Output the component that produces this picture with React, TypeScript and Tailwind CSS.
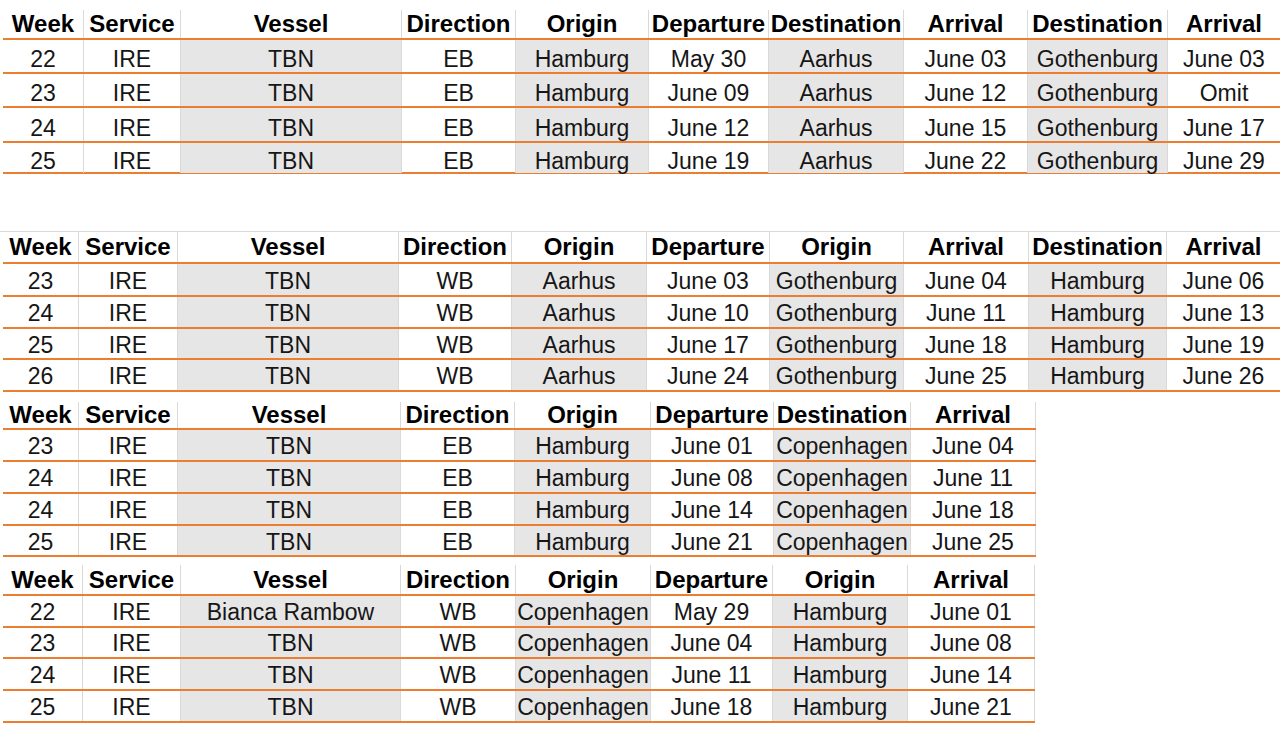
import clsx from "clsx";

type Row = { h: string; cells: string[] };

type Schedule = {
  cols: string;
  width: string;
  wrap: string;
  headH: string;
  head: string[];
  rows: Row[];
  // grey fill on body cells of these columns
  shaded: number[];
  edge?: boolean;
  // body text sits a bit low in the first block
  bodyPad: string;
};

const EB_GOT: Schedule = {
  cols: "grid-cols-[80px_97px_221px_114px_133px_120px_135px_124px_140px_113px]",
  width: "w-[1277px]",
  wrap: "pt-[10px]",
  headH: "h-[30px]",
  head: ["Week", "Service", "Vessel", "Direction", "Origin", "Departure", "Destination", "Arrival", "Destination", "Arrival"],
  rows: [
    { h: "h-[34px]", cells: ["22", "IRE", "TBN", "EB", "Hamburg", "May 30", "Aarhus", "June 03", "Gothenburg", "June 03"] },
    { h: "h-[34px]", cells: ["23", "IRE", "TBN", "EB", "Hamburg", "June 09", "Aarhus", "June 12", "Gothenburg", "Omit"] },
    { h: "h-[35px]", cells: ["24", "IRE", "TBN", "EB", "Hamburg", "June 12", "Aarhus", "June 15", "Gothenburg", "June 17"] },
    { h: "h-[31px]", cells: ["25", "IRE", "TBN", "EB", "Hamburg", "June 19", "Aarhus", "June 22", "Gothenburg", "June 29"] },
  ],
  shaded: [2, 4, 6, 8],
  bodyPad: "pt-[7px]",
};

const WB_AAR: Schedule = {
  cols: "grid-cols-[75px_99px_221px_113px_135px_123px_134px_125px_138px_114px]",
  width: "w-[1277px]",
  wrap: "mt-[57px] border-t border-[#d9d9d9]",
  headH: "h-[32px]",
  head: ["Week", "Service", "Vessel", "Direction", "Origin", "Departure", "Origin", "Arrival", "Destination", "Arrival"],
  rows: [
    { h: "h-[33px]", cells: ["23", "IRE", "TBN", "WB", "Aarhus", "June 03", "Gothenburg", "June 04", "Hamburg", "June 06"] },
    { h: "h-[32px]", cells: ["24", "IRE", "TBN", "WB", "Aarhus", "June 10", "Gothenburg", "June 11", "Hamburg", "June 13"] },
    { h: "h-[31px]", cells: ["25", "IRE", "TBN", "WB", "Aarhus", "June 17", "Gothenburg", "June 18", "Hamburg", "June 19"] },
    { h: "h-[32px]", cells: ["26", "IRE", "TBN", "WB", "Aarhus", "June 24", "Gothenburg", "June 25", "Hamburg", "June 26"] },
  ],
  shaded: [2, 4, 6, 8],
  bodyPad: "pt-[3px]",
};

const EB_CPH: Schedule = {
  cols: "grid-cols-[75px_99px_223px_114px_136px_123px_137px_126px]",
  width: "w-[1033px]",
  wrap: "pt-[10px]",
  headH: "h-[28px]",
  head: ["Week", "Service", "Vessel", "Direction", "Origin", "Departure", "Destination", "Arrival"],
  rows: [
    { h: "h-[32px]", cells: ["23", "IRE", "TBN", "EB", "Hamburg", "June 01", "Copenhagen", "June 04"] },
    { h: "h-[32px]", cells: ["24", "IRE", "TBN", "EB", "Hamburg", "June 08", "Copenhagen", "June 11"] },
    { h: "h-[32px]", cells: ["24", "IRE", "TBN", "EB", "Hamburg", "June 14", "Copenhagen", "June 18"] },
    { h: "h-[31px]", cells: ["25", "IRE", "TBN", "EB", "Hamburg", "June 21", "Copenhagen", "June 25"] },
  ],
  shaded: [2, 4, 6],
  edge: true,
  bodyPad: "pt-[3px]",
};

const WB_CPH: Schedule = {
  cols: "grid-cols-[79px_98px_220px_115px_135px_122px_135px_128px]",
  width: "w-[1032px]",
  wrap: "pt-[8px]",
  headH: "h-[31px]",
  head: ["Week", "Service", "Vessel", "Direction", "Origin", "Departure", "Origin", "Arrival"],
  rows: [
    { h: "h-[32px]", cells: ["22", "IRE", "Bianca Rambow", "WB", "Copenhagen", "May 29", "Hamburg", "June 01"] },
    { h: "h-[31px]", cells: ["23", "IRE", "TBN", "WB", "Copenhagen", "June 04", "Hamburg", "June 08"] },
    { h: "h-[32px]", cells: ["24", "IRE", "TBN", "WB", "Copenhagen", "June 11", "Hamburg", "June 14"] },
    { h: "h-[32px]", cells: ["25", "IRE", "TBN", "WB", "Copenhagen", "June 18", "Hamburg", "June 21"] },
  ],
  shaded: [2, 4, 6],
  edge: true,
  bodyPad: "pt-[2px]",
};

function ScheduleTable({ t }: { t: Schedule }) {
  const last = t.head.length - 1;
  const cell = (i: number) =>
    clsx(
      "flex items-center justify-center whitespace-nowrap",
      i > 0 && "border-l border-[#d9d9d9]",
      t.edge && i === last && "border-r border-[#d9d9d9]",
    );

  return (
    <div className={t.wrap}>
      <div className={clsx("ml-[3px]", t.width)}>
        {/* header row */}
        <div className={clsx("grid border-b-2 border-[#ed7d31] text-[24px] font-bold text-black", t.cols, t.headH)}>
          {t.head.map((label, i) => (
            <div key={i} className={cell(i)}>
              {label}
            </div>
          ))}
        </div>
        {t.rows.map((r, ri) => (
          <div key={ri} className={clsx("grid border-b-2 border-[#ed7d31] text-[23px] text-[#161616]", t.cols, r.h)}>
            {r.cells.map((c, i) => (
              <div key={i} className={clsx(cell(i), t.bodyPad, t.shaded.includes(i) && "bg-[#e7e6e6]")}>
                {c}
              </div>
            ))}
          </div>
        ))}
      </div>
    </div>
  );
}

export default function App() {
  return (
    <div className="min-h-screen bg-white font-['Liberation_Sans',Arial,sans-serif] leading-none">
      <ScheduleTable t={EB_GOT} />
      <ScheduleTable t={WB_AAR} />
      <ScheduleTable t={EB_CPH} />
      <ScheduleTable t={WB_CPH} />
    </div>
  );
}
